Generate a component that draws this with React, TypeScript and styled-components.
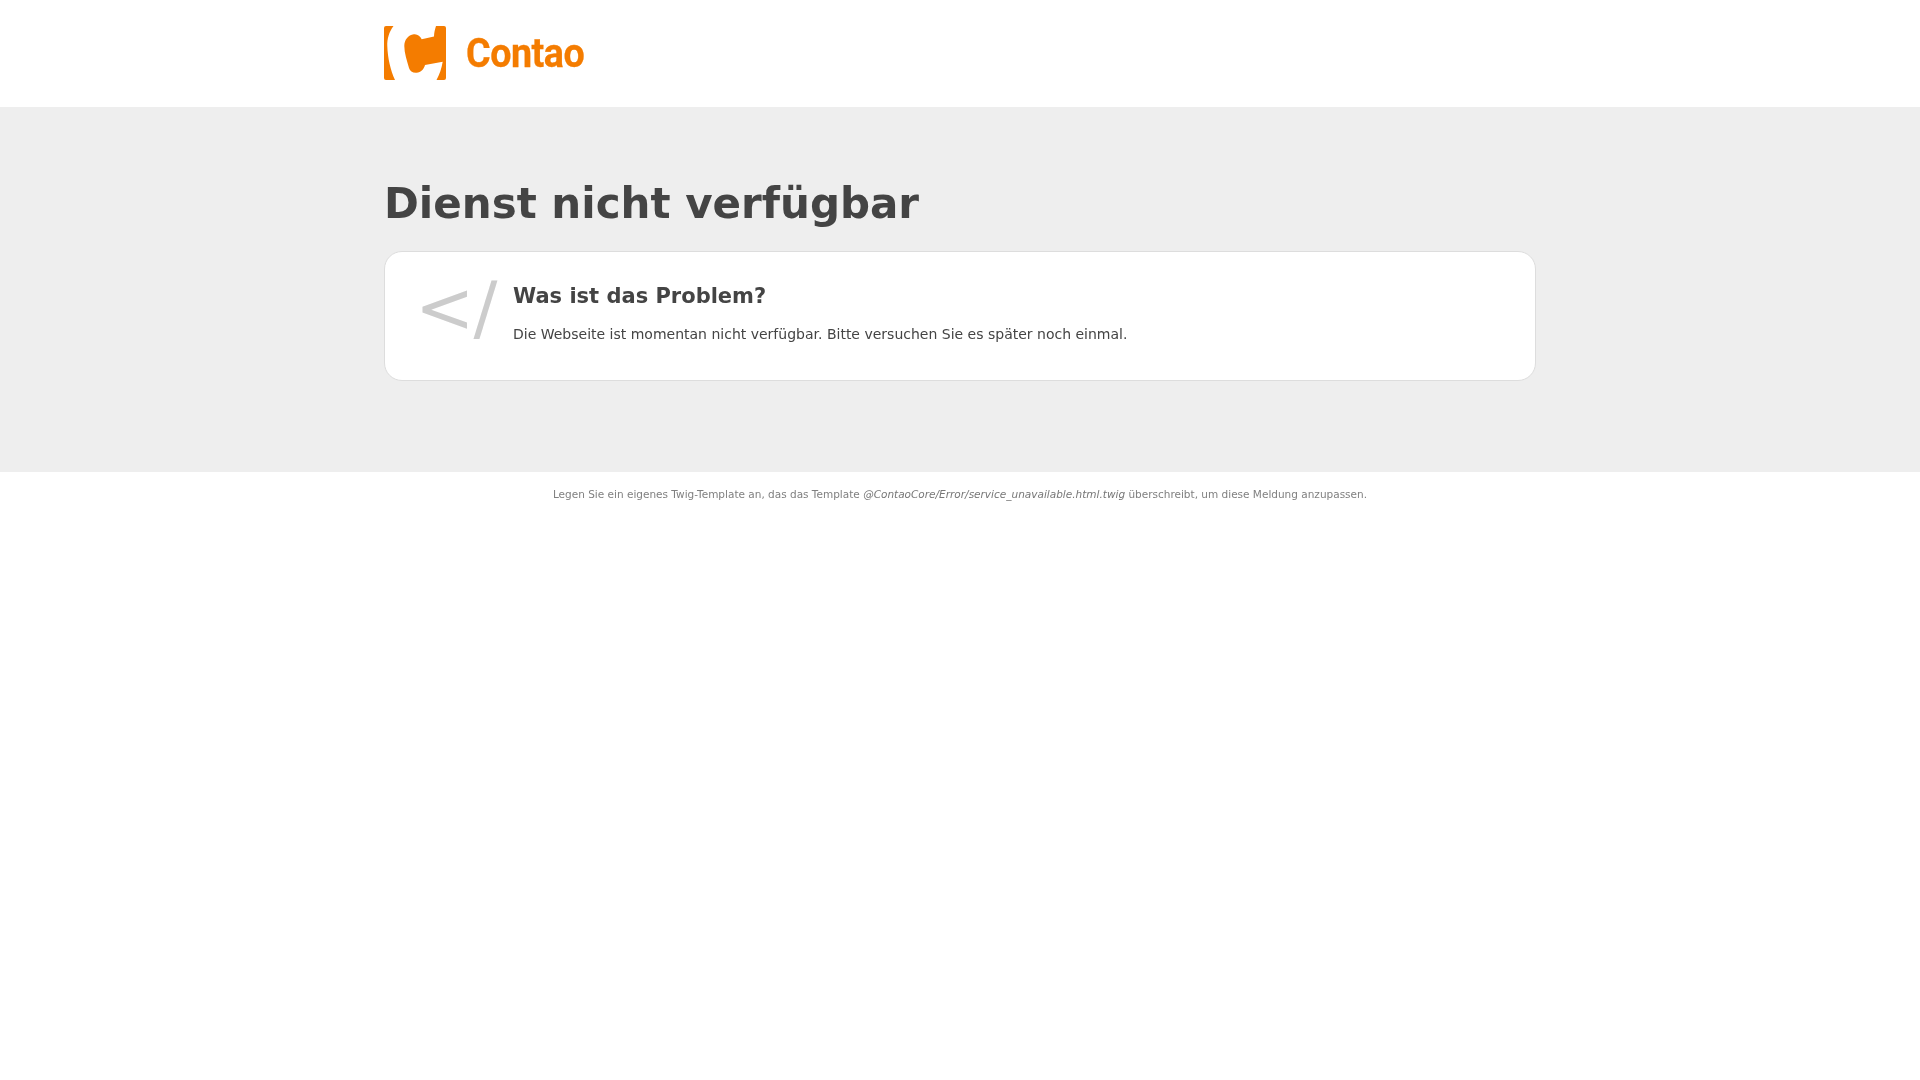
import React from "react";
import styled, { createGlobalStyle } from "styled-components";

const Global = createGlobalStyle`
  html, body { margin: 0; padding: 0; background: #fff; }
  body { font-family: "DejaVu Sans", sans-serif; color: #444; }
  #root { will-change: transform; }
`;
const Header = styled.header`
  height: 107px;
`;
const Wrap = styled.div`
  width: 1152px;
  margin: 0 auto;
`;
const LogoRow = styled.div`
  display: flex;
  align-items: center;
  height: 106px;
  gap: 20px;
`;
const LogoMark = styled.svg`
  display: block;
  width: 62px;
  height: 54px;
  flex: none;
`;
const LogoText = styled.span`
  display: inline-block;
  font-family: "Roboto", sans-serif;
  font-weight: 700;
  font-size: 40px;
  line-height: 1;
  letter-spacing: -0.5px;
  color: #f47c00;
  -webkit-text-stroke: 0.3px #f47c00;
  transform: scaleX(0.94);
  transform-origin: left center;
  margin-top: 1px;
`;
const Main = styled.main`
  background: #eee;
  height: 365px;
  padding-top: 68px;
  box-sizing: border-box;
`;
const Title = styled.h1`
  margin: 0 0 18px;
  font-size: 42px;
  line-height: 58px;
  font-weight: 700;
  color: #444;
`;
const Card = styled.section`
  display: flex;
  height: 130px;
  box-sizing: border-box;
  background: #fff;
  border: 1px solid #ddd;
  border-radius: 18px;
  padding: 15px 0 0 30px;
`;
const Glyph = styled.div`
  width: 98px;
  flex: none;
  font-size: 71px;
  line-height: 82px;
  letter-spacing: -1px;
  color: #ccc;
  white-space: nowrap;
`;
const Heading = styled.h2`
  margin: 16px 0 14px;
  font-size: 21px;
  line-height: 26px;
  font-weight: 700;
  color: #444;
`;
const Text = styled.p`
  margin: 0;
  font-size: 14px;
  line-height: 22px;
  color: #444;
`;
const Footer = styled.footer`
  text-align: center;
  padding-top: 14px;
  font-size: 10.5px;
  line-height: 16px;
  color: #808080;
  em { font-style: italic; color: #777; }
`;

export default function App() {
  return (
    <>
      <Global />
      <Header>
        <Wrap>
          <LogoRow>
            <LogoMark viewBox="0 0 62 54" aria-hidden="true">
              <path fill="#f47c00" d="M2 0h7.500C5 6 3 13 3.300 20 3.700 32 6.500 44 11 54H2a2 2 0 0 1-2-2V2a2 2 0 0 1 2-2z" />
              <path fill="#f47c00" d="M52 0h8a2 2 0 0 1 2 2v50a2 2 0 0 1-2 2h-7.500c3-6 5-11 6.200-18.300L41 39c-1 4-4 7.500-8.500 7.700-4 .2-6.500-1.500-7.500-4.700C23 35 20.300 27 20.300 20c0-6 3.700-10.800 9.500-11.700 3.700-.5 6.400 2 7.900 5l12.300-2.800C50 7 51 3 52 0z" />
            </LogoMark>
            <LogoText>Contao</LogoText>
          </LogoRow>
        </Wrap>
      </Header>
      <Main>
        <Wrap>
          <Title>Dienst nicht verfügbar</Title>
          <Card>
            <Glyph>&lt;/</Glyph>
            <div>
              <Heading>Was ist das Problem?</Heading>
              <Text>Die Webseite ist momentan nicht verfügbar. Bitte versuchen Sie es später noch einmal.</Text>
            </div>
          </Card>
        </Wrap>
      </Main>
      <Footer>
        Legen Sie ein eigenes Twig-Template an, das das Template <em>@ContaoCore/Error/service_unavailable.html.twig</em> überschreibt, um diese Meldung anzupassen.
      </Footer>
    </>
  );
}
